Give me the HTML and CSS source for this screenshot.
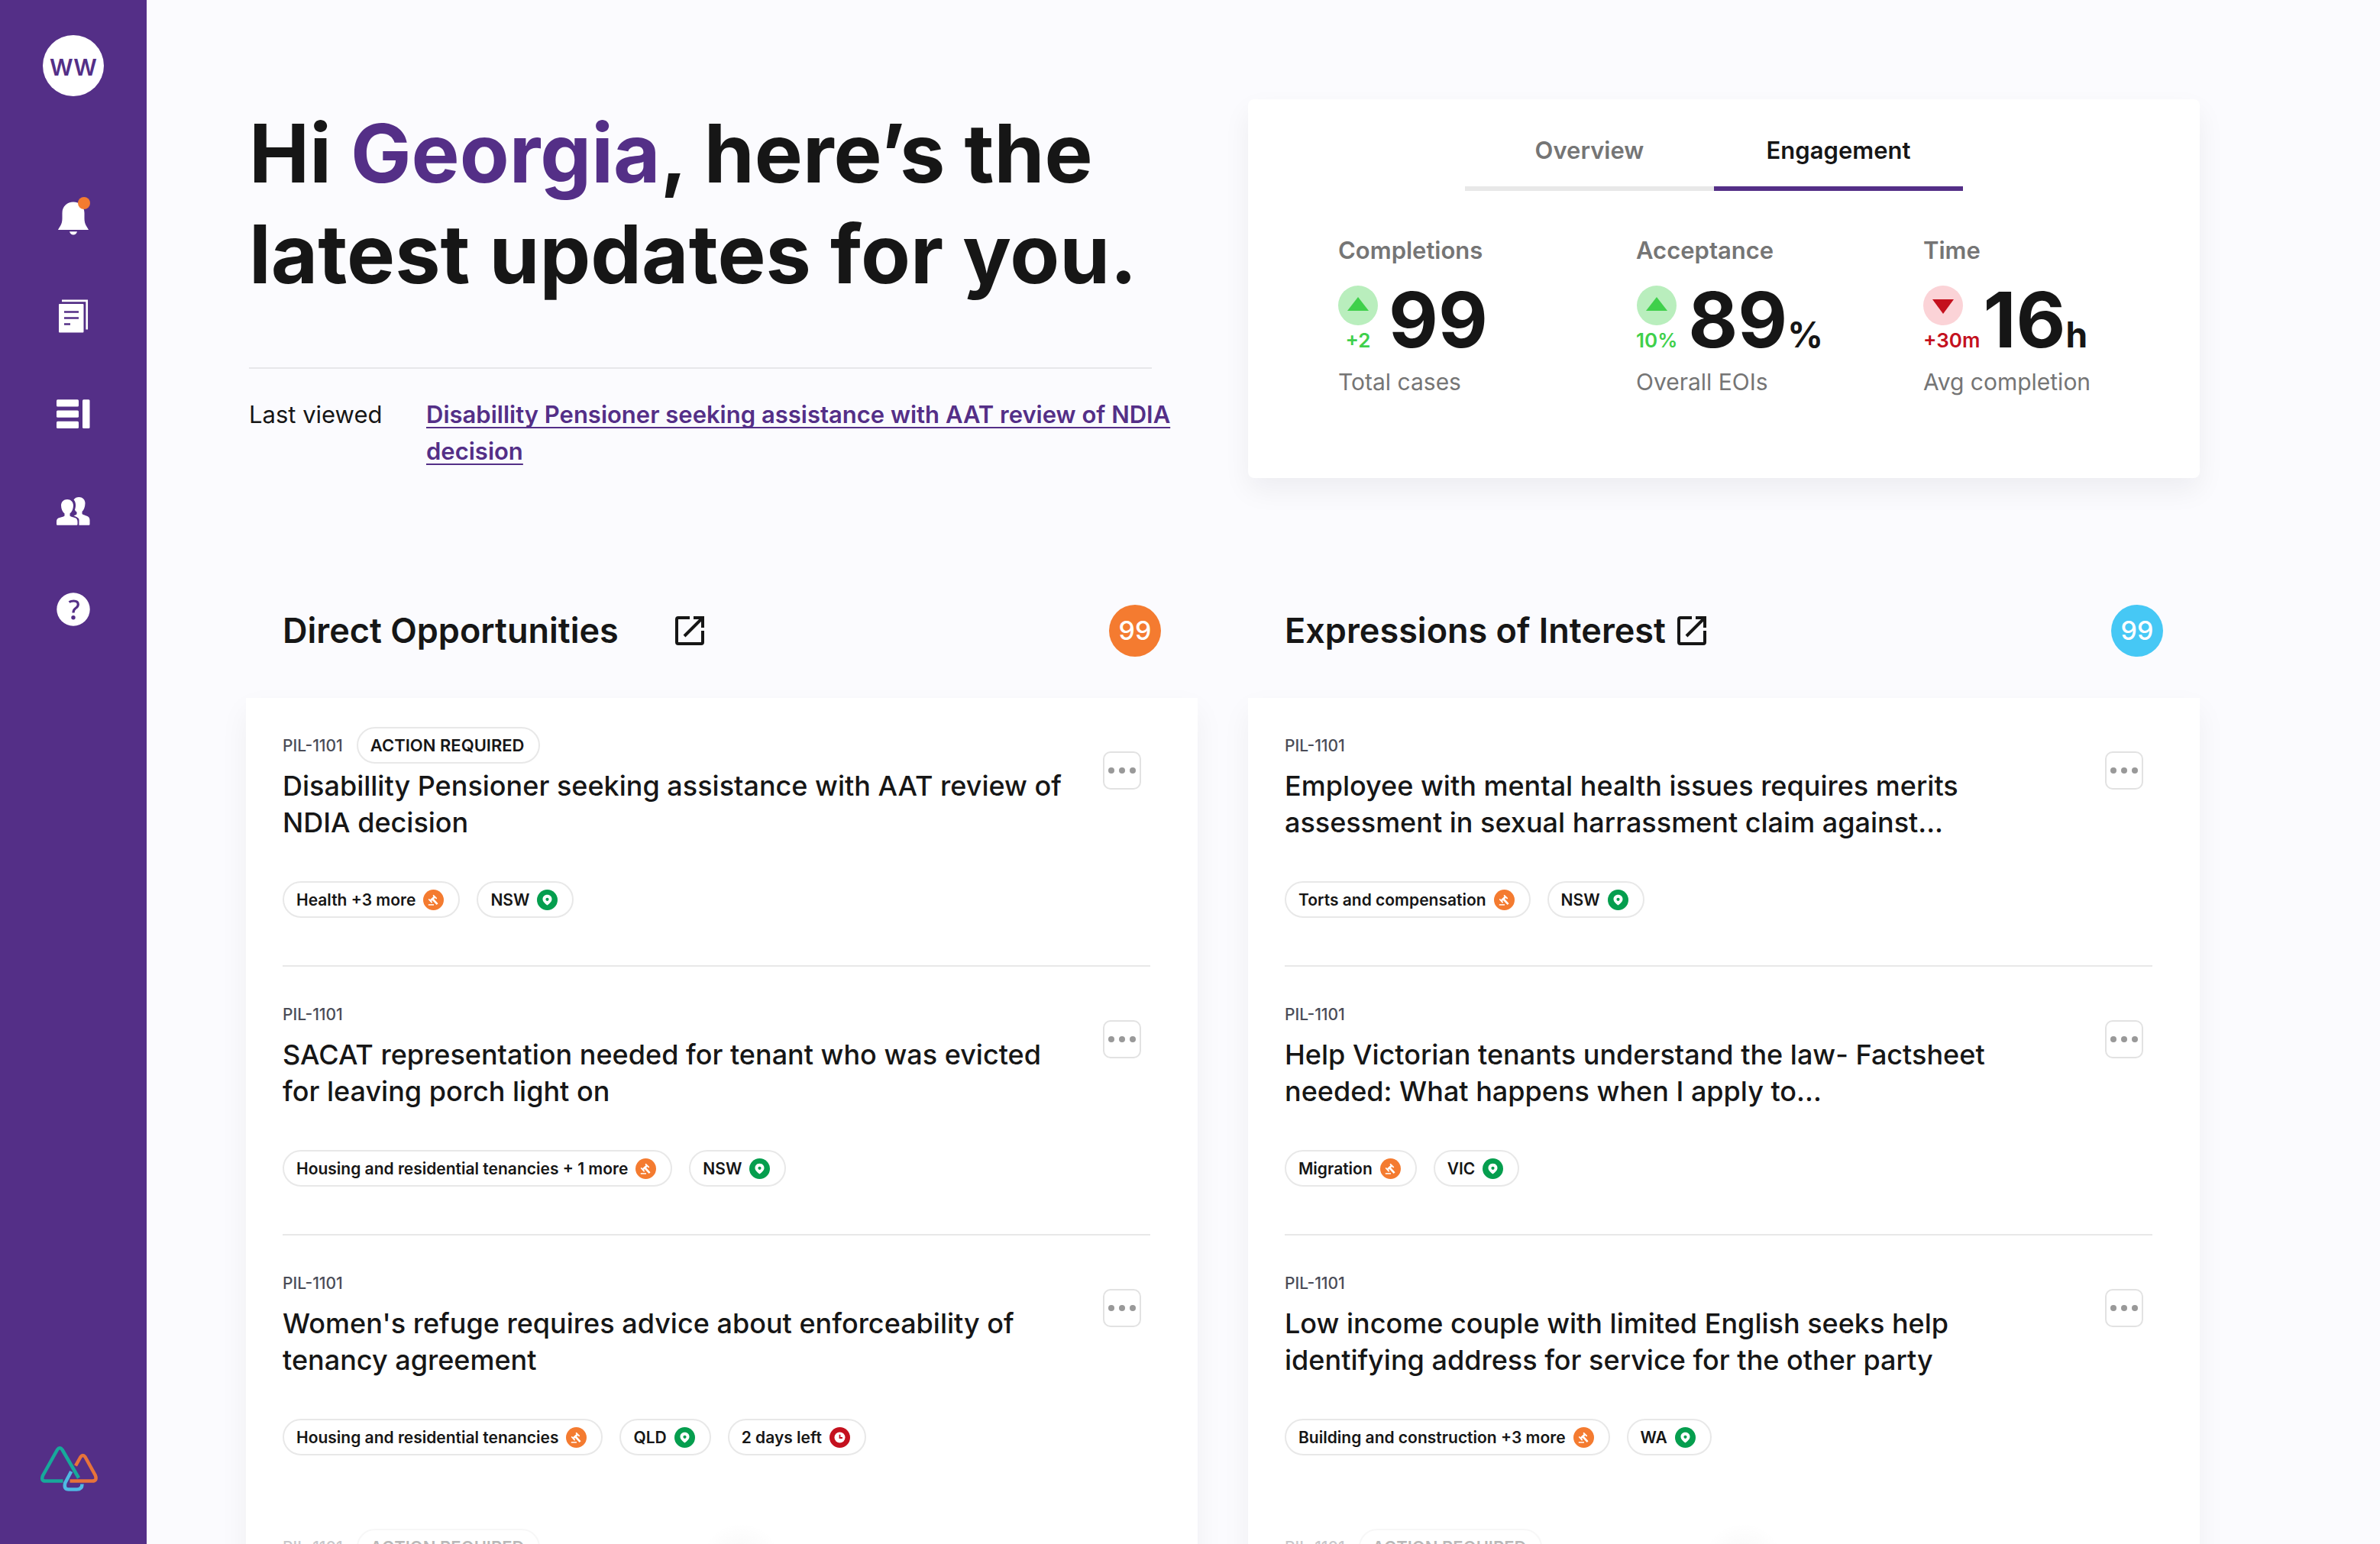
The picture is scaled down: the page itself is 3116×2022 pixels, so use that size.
FILE: index.html
```html
<!DOCTYPE html>
<html lang="en">
<head>
<meta charset="utf-8">
<meta name="viewport" content="width=device-width, initial-scale=1">
<title>Dashboard</title>
<link rel="stylesheet" href="styles.css">
</head>
<body>
<svg class="sprite" aria-hidden="true">
  <symbol id="open" viewBox="0 0 38 38"><path d="M19 2H4Q2 2 2 4V34Q2 36 4 36H34Q36 36 36 34V19M24 2H36V15M12 26L36 2" fill="none" stroke="currentColor" stroke-width="4"/></symbol>
  <symbol id="more" viewBox="0 0 40 8"><circle cx="6" cy="4" r="4"/><circle cx="20" cy="4" r="4"/><circle cx="34" cy="4" r="4"/></symbol>
  <symbol id="gavel" viewBox="0 0 27 27"><circle cx="13.500" cy="13.500" r="13.500" fill="#f47b30"/><path d="M9.800 14.200L14.800 9.800M12.500 12.500L18.600 19.200" stroke="#fff" stroke-width="2.600"/><path d="M13.600 7.800L17.200 11.400M7.800 13L11.200 16.600" stroke="#fff" stroke-width="1.800" stroke-linecap="round"/><path d="M6.800 19.900H14" stroke="#fff" stroke-width="1.500"/></symbol>
  <symbol id="pin" viewBox="0 0 27 27"><circle cx="13.500" cy="13.500" r="13.500" fill="#059e4e"/><path d="M13.500 6.800C9.800 6.800 7.500 9.400 7.500 12.400C7.500 15.900 11 18.300 13.500 20.600C16 18.300 19.500 15.900 19.500 12.400C19.500 9.400 17.200 6.800 13.500 6.800Z" fill="#fff"/><circle cx="13.500" cy="12.800" r="2.100" fill="#059e4e"/></symbol>
  <symbol id="clock" viewBox="0 0 27 27"><circle cx="13.500" cy="13.500" r="13.500" fill="#c4111e"/><circle cx="13.500" cy="13.500" r="7" fill="#fff"/><path d="M13.500 9.800V14H17" fill="none" stroke="#c4111e" stroke-width="1.800"/></symbol>
</svg>

<div class="app">
  <nav class="sidebar" aria-label="Main">
    <a class="avatar" href="#">WW</a>
    <div class="nav">
      <a href="#" aria-label="Notifications"><svg viewBox="0 0 44 44"><path d="M2 37C4 33 7.500 30 7.500 22V15C7.500 6 14 0.500 22 0.500S36.500 6 36.500 15V22C36.500 30 40 33 42 37Z"/><path d="M17 39.200H27Q25.500 43.500 22 43.500T17 39.200Z"/><circle cx="36" cy="2" r="8" fill="#f47b30"/></svg></a>
      <a href="#" aria-label="Documents"><svg viewBox="0 0 44 44"><rect x="3" y="6" width="32.500" height="37.500" rx="1"/><path d="M7 1.800H39.700V39.500" fill="none" stroke="#fff" stroke-width="2.700"/><path d="M10 16.500H29M10 24.500H29M10 32.500H18" stroke="#542f87" stroke-width="2.700"/></svg></a>
      <a href="#" aria-label="Cases"><svg viewBox="0 0 44 44"><rect y="3.300" width="29" height="9.300" rx="1.500"/><rect y="17.500" width="29" height="9.300" rx="1.500"/><rect y="31.700" width="29" height="9.300" rx="1.500"/><rect x="34" y="3.300" width="9.500" height="37.700" rx="1.500"/></svg></a>
      <a href="#" aria-label="People"><svg viewBox="0 0 44 44"><path d="M29.500 3C33.800 3 37.500 6 37.500 11C37.500 16 35.500 20 33.500 22V25C37 28 43.500 26.500 43.500 33V38.500Q43.500 39.700 42.300 39.700H29.500V33C29.500 30.500 27 29 22.500 27.500C24.500 26.500 26.500 26.300 26.500 25V22.500C25.500 22 24.500 21 24 19.500C26 14 25 9 22.500 6.500C24 4 26.500 3 29.500 3Z"/><path d="M14 6C18.500 6 22 9 22 14C22 18.500 20 22.500 17.500 24.500V27.500C21 30.500 27.500 28.500 27.500 35V38.500Q27.500 39.700 26.300 39.700H1.200Q0 39.700 0 38.500V35C0 28.500 7 30.500 10.500 27.500V24.500C8 22.500 6 18.500 6 14C6 9 9.500 6 14 6Z"/></svg></a>
      <a href="#" aria-label="Help"><svg viewBox="0 0 44 44"><circle cx="22" cy="22" r="21.700"/><path d="M16.500 12.500Q19 11 22.500 11Q28.300 11 28.300 15.500Q28.300 18.500 25 20.500Q22 22.500 22 26.500" fill="none" stroke="#542f87" stroke-width="3.200"/><circle cx="22" cy="32.800" r="2.700" fill="#542f87"/></svg></a>
    </div>
    <a class="logo" href="#" aria-label="Home"><svg viewBox="0 0 75 59" fill="none" stroke-width="4.500" stroke-linejoin="round"><path d="M50 41.500L28.500 4.500Q25.300 0 22 4.500L3 38.500Q0.500 45.500 6 45.500H29.500" stroke="#17a99b"/><path d="M46 25.500L52.500 14Q55.500 9.800 58.500 14L71.800 38Q74.500 45.500 68 45.500H38.500" stroke="#e7733a"/><path d="M40.200 33L32.300 48Q30 56.500 37 56.500H47.500Q54.500 56.500 54.500 49.500" stroke="#4fb9e3"/></svg></a>
  </nav>

  <main class="main">
    <header class="intro">
      <h1>Hi <span class="name">Georgia</span>, here’s the latest updates for you.</h1>
      <div class="last">
        <span class="last-label">Last viewed</span>
        <a href="#">Disabillity Pensioner seeking assistance with AAT review of NDIA decision</a>
      </div>
    </header>

    <section class="stats" aria-label="Statistics">
      <div class="tabs" role="tablist">
        <button type="button" role="tab" aria-selected="false">Overview</button>
        <button type="button" role="tab" aria-selected="true">Engagement</button>
      </div>
      <div class="figures">
        <div class="figure">
          <h3>Completions</h3>
          <div class="value"><div class="trend up"><svg viewBox="0 0 52 52"><circle cx="26" cy="26" r="26"/><path d="M26 15L40 33H12Z"/></svg><span>+2</span></div><strong>99</strong></div>
          <p>Total cases</p>
        </div>
        <div class="figure">
          <h3>Acceptance</h3>
          <div class="value"><div class="trend up"><svg viewBox="0 0 52 52"><circle cx="26" cy="26" r="26"/><path d="M26 15L40 33H12Z"/></svg><span>10%</span></div><strong>89<small>%</small></strong></div>
          <p>Overall EOIs</p>
        </div>
        <div class="figure">
          <h3>Time</h3>
          <div class="value tight"><div class="trend down"><svg viewBox="0 0 52 52"><circle cx="26" cy="26" r="26"/><path d="M26 37L40 18H12Z"/></svg><span>+30m</span></div><strong>16<small>h</small></strong></div>
          <p>Avg completion</p>
        </div>
      </div>
    </section>

    <section class="list">
      <header class="list-head">
        <h2>Direct Opportunities</h2>
        <a class="open" href="#" aria-label="Open Direct Opportunities"><svg><use href="#open"/></svg></a>
        <span class="count orange">99</span>
      </header>
      <div class="panel">
        <article class="item">
          <div class="body">
            <div class="meta"><span class="ref">PIL-1101</span><span class="chip">ACTION REQUIRED</span></div>
            <h3>Disabillity Pensioner seeking assistance with AAT review of NDIA decision</h3>
            <div class="chips"><span class="chip">Health +3 more<svg><use href="#gavel"/></svg></span><span class="chip">NSW<svg><use href="#pin"/></svg></span></div>
          </div>
          <button class="more" type="button" aria-label="More actions"><svg><use href="#more"/></svg></button>
        </article>
        <article class="item">
          <div class="body">
            <div class="meta"><span class="ref">PIL-1101</span></div>
            <h3>SACAT representation needed for tenant who was evicted for leaving porch light on</h3>
            <div class="chips"><span class="chip">Housing and residential tenancies + 1 more<svg><use href="#gavel"/></svg></span><span class="chip">NSW<svg><use href="#pin"/></svg></span></div>
          </div>
          <button class="more" type="button" aria-label="More actions"><svg><use href="#more"/></svg></button>
        </article>
        <article class="item last-full">
          <div class="body">
            <div class="meta"><span class="ref">PIL-1101</span></div>
            <h3>Women's refuge requires advice about enforceability of tenancy agreement</h3>
            <div class="chips"><span class="chip">Housing and residential tenancies<svg><use href="#gavel"/></svg></span><span class="chip">QLD<svg><use href="#pin"/></svg></span><span class="chip">2 days left<svg><use href="#clock"/></svg></span></div>
          </div>
          <button class="more" type="button" aria-label="More actions"><svg><use href="#more"/></svg></button>
        </article>
        <article class="item fading">
          <div class="body">
            <div class="meta"><span class="ref">PIL-1101</span><span class="chip">ACTION REQUIRED</span></div>
          </div>
        </article>
      </div>
    </section>

    <section class="list">
      <header class="list-head">
        <h2>Expressions of Interest</h2>
        <a class="open" href="#" aria-label="Open Expressions of Interest"><svg><use href="#open"/></svg></a>
        <span class="count blue">99</span>
      </header>
      <div class="panel">
        <article class="item">
          <div class="body">
            <div class="meta"><span class="ref">PIL-1101</span></div>
            <h3>Employee with mental health issues requires merits assessment in sexual harrassment claim against...</h3>
            <div class="chips"><span class="chip">Torts and compensation<svg><use href="#gavel"/></svg></span><span class="chip">NSW<svg><use href="#pin"/></svg></span></div>
          </div>
          <button class="more" type="button" aria-label="More actions"><svg><use href="#more"/></svg></button>
        </article>
        <article class="item">
          <div class="body">
            <div class="meta"><span class="ref">PIL-1101</span></div>
            <h3>Help Victorian tenants understand the law- Factsheet needed: What happens when I apply to...</h3>
            <div class="chips"><span class="chip">Migration<svg><use href="#gavel"/></svg></span><span class="chip">VIC<svg><use href="#pin"/></svg></span></div>
          </div>
          <button class="more" type="button" aria-label="More actions"><svg><use href="#more"/></svg></button>
        </article>
        <article class="item last-full">
          <div class="body">
            <div class="meta"><span class="ref">PIL-1101</span></div>
            <h3>Low income couple with limited English seeks help identifying address for service for the other party</h3>
            <div class="chips"><span class="chip">Building and construction +3 more<svg><use href="#gavel"/></svg></span><span class="chip">WA<svg><use href="#pin"/></svg></span></div>
          </div>
          <button class="more" type="button" aria-label="More actions"><svg><use href="#more"/></svg></button>
        </article>
        <article class="item fading">
          <div class="body">
            <div class="meta"><span class="ref">PIL-1101</span><span class="chip">ACTION REQUIRED</span></div>
          </div>
        </article>
      </div>
    </section>
  </main>
</div>
</body>
</html>
```
FILE: styles.css
```css
* { box-sizing: border-box; }
body {
  margin: 0;
  background: #fbfbfe;
  color: #161616;
  font-family: Inter, "Noto Sans", sans-serif;
}
h1, h2, h3, p { margin: 0; }
button { font: inherit; background: none; border: 0; padding: 0; cursor: pointer; }
svg { display: block; }
.sprite { position: absolute; width: 0; height: 0; }

.app { display: flex; height: 100vh; overflow: hidden; }

/* Sidebar */
.sidebar {
  flex: 0 0 192px;
  display: flex;
  flex-direction: column;
  align-items: center;
  background: #542f87;
  padding: 46px 0 69px;
}
.avatar {
  width: 80px;
  height: 80px;
  border-radius: 50%;
  background: #fff;
  color: #542f87;
  font-size: 30px;
  font-weight: 600;
  line-height: 84px;
  text-align: center;
  text-decoration: none;
}
.nav { display: flex; flex-direction: column; gap: 84px; margin-top: 138px; }
.nav svg { width: 44px; height: 44px; fill: #fff; overflow: visible; }
.logo { margin: auto 0 0; padding-right: 12px; }
.logo svg { width: 75px; height: 59px; }

/* Main grid */
.main {
  flex: 1;
  display: grid;
  grid-template-columns: 1fr 1fr;
  grid-template-rows: auto auto;
  align-content: start;
  column-gap: 66px;
  row-gap: 166px;
  padding: 130px 236px 0 130px;
}

.intro { padding: 5px 0 0 4px; }
h1 { font-size: 106px; line-height: 132px; font-weight: 700; max-width: 1182px; }
.name { color: #542f87; }
.last { display: flex; padding-top: 36px; font-size: 31px; line-height: 48px; }
.intro h1::after { content: ""; display: block; height: 2px; margin-top: 82px; background: #e7e7ea; }
.last-label { flex: 0 0 232px; }
.last a {
  color: #542f87;
  font-weight: 600;
  text-decoration-thickness: 2px;
  text-underline-offset: 5px;
  text-decoration-skip-ink: none;
}

/* Statistics */
.stats {
  background: #fff;
  border-radius: 8px;
  box-shadow: 0 16px 36px rgba(20, 20, 30, .06);
  padding: 47px 118px 106px;
}
.tabs { display: flex; width: 652px; margin: 0 0 0 166px; }
.tabs button {
  flex: 1;
  padding-bottom: 27px;
  border-bottom: 6px solid #e8e8e8;
  color: #757575;
  font-size: 31px;
  line-height: 40px;
  font-weight: 600;
}
.tabs button[aria-selected="true"] { border-color: #542f87; color: #161616; }
.figures { display: grid; grid-template-columns: 390px 376px auto; margin-top: 58px; }
.figure h3, .figure p { font-size: 31px; line-height: 40px; color: #757575; }
.figure h3 { font-weight: 600; }
.figure p { font-size: 30px; }
.value { display: flex; gap: 14px; height: 90px; margin: 26px 0 16px; }
.value.tight { gap: 4px; }
.trend { display: flex; flex-direction: column; align-items: center; gap: 2px; font-size: 26px; line-height: 36px; font-weight: 600; }
.trend svg { width: 52px; height: 52px; }
.up { color: #3fd04b; }
.up circle { fill: #b9eebd; }
.down { align-items: flex-start; color: #c4111e; }
.down circle { fill: #fbd3d7; }
.trend path { fill: currentColor; }
.value strong { font-size: 100px; line-height: 90px; font-weight: 700; }
.value small { font-size: 46px; line-height: 46px; }

/* Lists */
.list-head { display: flex; align-items: center; height: 68px; padding: 0 48px; margin-bottom: 54px; }
h2 { min-width: 514px; font-size: 45px; line-height: 60px; font-weight: 600; white-space: nowrap; }
.open { color: #161616; }
.open svg { width: 38px; height: 38px; }
.count {
  width: 68px;
  height: 68px;
  margin-left: auto;
  border-radius: 50%;
  color: #fff;
  font-size: 34px;
  line-height: 68px;
  font-weight: 500;
  text-align: center;
}
.orange { background: #f47b30; }
.blue { background: #46c8f5; }
.panel {
  background: #fff;
  box-shadow: 0 16px 36px rgba(20, 20, 30, .05);
  padding: 0 62px 60px 48px;
}
.item {
  display: flex;
  justify-content: space-between;
  align-items: flex-start;
  padding: 38px 0 62px;
  border-bottom: 2px solid #e8e8e8;
}
.body { max-width: 1030px; }
.meta { display: flex; align-items: center; gap: 18px; height: 48px; margin-bottom: 5px; }
.ref { color: #4a4c57; font-size: 21px; font-weight: 500; }
.item h3 { font-size: 36px; line-height: 48px; font-weight: 500; }
.chips { display: flex; gap: 22px; margin-top: 53px; }
.chip {
  display: flex;
  align-items: center;
  gap: 10px;
  height: 48px;
  padding: 0 19px 0 16px;
  border: 2px solid #e8e8e8;
  border-radius: 24px;
  font-size: 21px;
  font-weight: 600;
  white-space: nowrap;
}
.meta .chip { font-size: 22px; }
.chip svg { width: 27px; height: 27px; }
.more {
  display: grid;
  place-items: center;
  width: 50px;
  height: 50px;
  margin: 32px 12px 0 0;
  border: 2px solid #e2e2e2;
  border-radius: 10px;
}
.more svg { width: 40px; height: 8px; fill: #999; }
.last-full { border-bottom: 0; padding-bottom: 58px; }
.fading {
  border-bottom: 0;
  opacity: .3;
  background: radial-gradient(circle at 600px 84px, rgba(0, 0, 0, .12), rgba(0, 0, 0, 0) 54px);
}
```
